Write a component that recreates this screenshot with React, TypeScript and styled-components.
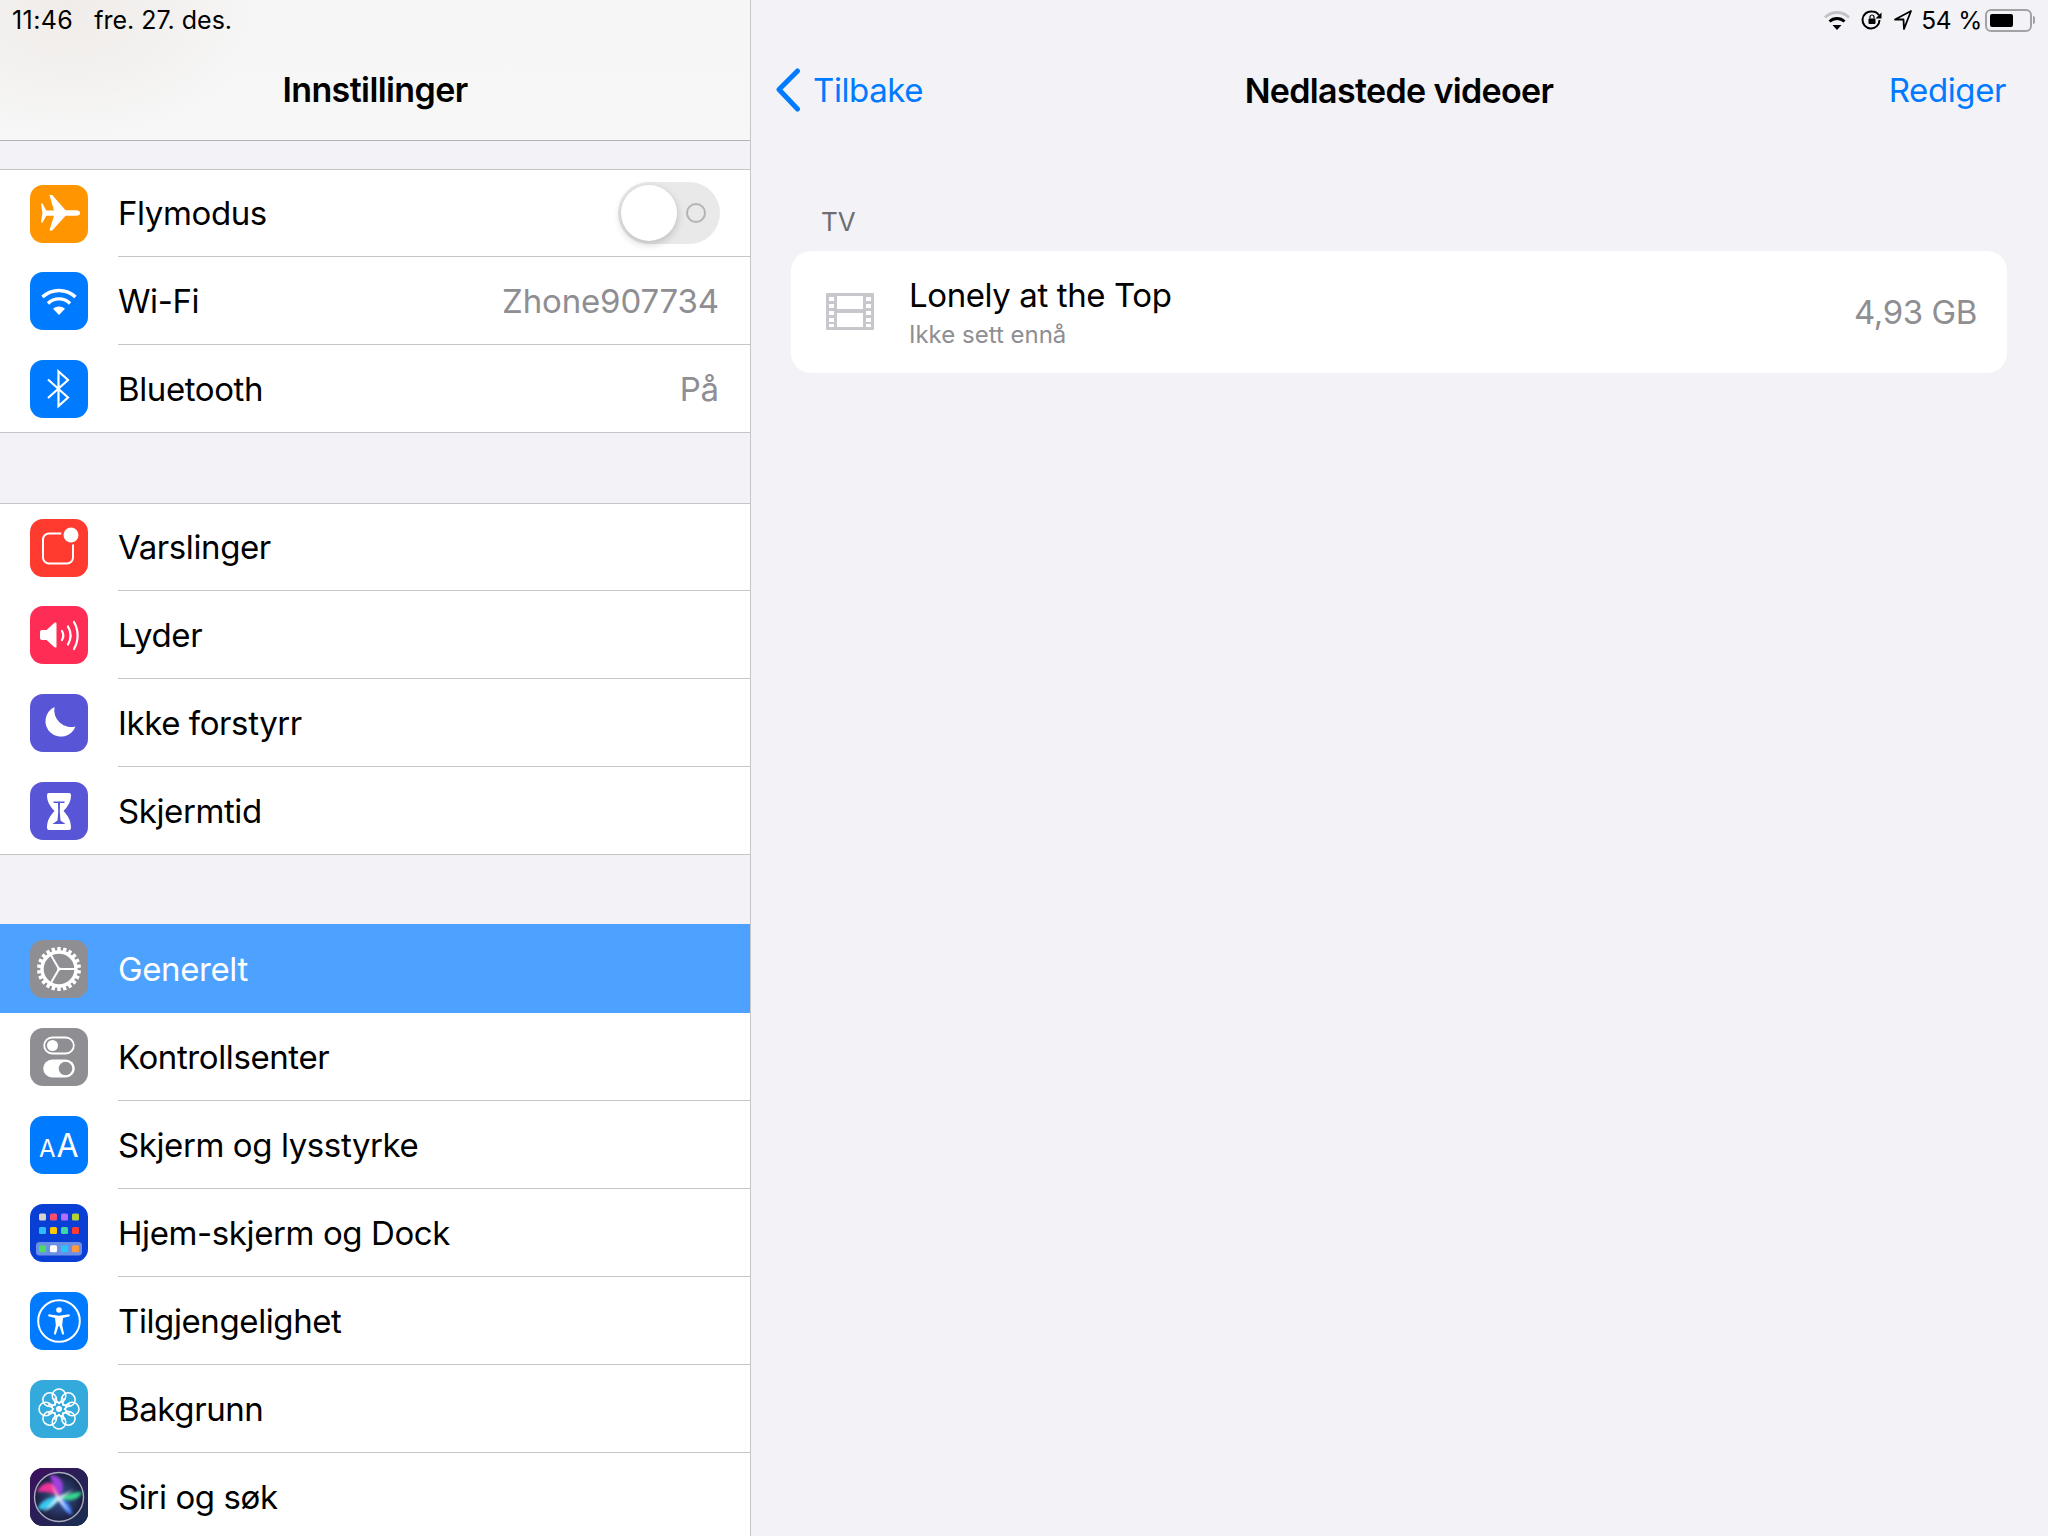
import React from 'react'
import styled, { createGlobalStyle } from 'styled-components'

const GlobalStyle = createGlobalStyle`
  html, body { margin: 0; padding: 0; background: #f2f2f7; }
  body { font-family: Inter, "Noto Sans", sans-serif; color: #000; -webkit-font-smoothing: antialiased; }
  * { box-sizing: border-box; }
`

// ICONS //

const PlaneIcon = () => (
  <svg viewBox='0 0 58 58' width='58' height='58'>
    <path
      fill='#fff'
      d='M11 18.5h1.6l3.6 7H24L19.4 10h2.8L35.6 25.2h10.6c2.4 0 4 1.2 4 2.8s-1.6 2.8-4 2.8H35.6L22.2 45.5h-2.8L24 30.8h-7.8l-3.6 6.8H11l1.4-9.6z'
    />
  </svg>
)

const WifiIcon = () => (
  <svg viewBox='0 0 58 58' width='58' height='58' fill='none' stroke='#fff' strokeWidth='3.4'>
    <path d='M12.5 25a24 24 0 0 1 33 0' />
    <path d='M18 31.500a15.500 15.500 0 0 1 22 0' />
    <path d='M23 36.800a9 9 0 0 1 12 0L29 43z' fill='#fff' stroke='none' />
  </svg>
)

const BluetoothIcon = () => (
  <svg viewBox='0 0 58 58' width='58' height='58' fill='none' stroke='#fff' strokeWidth='2.2'>
    <path d='M18 19.5 38 37.5l-9.5 8.5V11.5l9.5 8.5-20 18' />
  </svg>
)

const NoticeIcon = () => (
  <svg viewBox='0 0 58 58' width='58' height='58'>
    <rect x='13' y='14.5' width='30' height='30' rx='6' fill='none' stroke='#fff' strokeWidth='2' />
    <circle cx='41' cy='16' r='10' fill='#ff3b30' />
    <circle cx='41' cy='16' r='7.5' fill='#fff' />
  </svg>
)

const SoundIcon = () => (
  <svg viewBox='0 0 58 58' width='58' height='58'>
    <path fill='#fff' d='M10 26c0-1.2.8-2 2-2h4.500l8-7.200c1-.8 2-.4 2 .8v22.800c0 1.200-1 1.600-2 .8l-8-7.200H12c-1.200 0-2-.8-2-2z' />
    <g fill='none' stroke='#fff' strokeWidth='2.2' strokeLinecap='round'>
      <path d='M32 25a9 9 0 0 1 0 9' />
      <path d='M38 20.500a18 18 0 0 1 0 18' />
      <path d='M44 16a27 27 0 0 1 0 27' />
    </g>
  </svg>
)

const MoonIcon = () => (
  <svg viewBox='0 0 58 58' width='58' height='58'>
    <path fill='#fff' d='M24.500 13A15.500 15.500 0 1 0 45.500 32.500 A 17 17 0 0 1 24.500 13z' />
  </svg>
)

const HourglassIcon = () => (
  <svg viewBox='0 0 58 58' width='58' height='58'>
    <path
      fill='#fff'
      d='M19 11h20a2 2 0 0 1 2 2c0 7-3 11-7.500 16 4.500 5 7.500 9 7.500 17a2 2 0 0 1-2 2H19a2 2 0 0 1-2-2c0-8 3-12 7.500-17C20 24 17 20 17 13a2 2 0 0 1 2-2z'
    />
    <path fill='#5856d6' d='M23.500 19.500h11v1.500h-4.500l-.2 9 .7 8.500 5 3.500H22.500l5-3.500.7-8.500-.2-9h-4.500z' />
  </svg>
)

const teeth = Array.from({ length: 22 }, (_, i) => (i * 360) / 22)

const GearIcon = () => (
  <svg viewBox='0 0 58 58' width='58' height='58' fill='none' stroke='#fff'>
    <circle cx='29' cy='29' r='17' strokeWidth='3.4' />
    {teeth.map(a => (
      <path key={a} d='M29 7v5' strokeWidth='3.4' transform={`rotate(${a} 29 29)`} />
    ))}
    <path d='M29 29h16M29 29l-8 13.800M29 29l-8-13.800' strokeWidth='2' />
    <circle cx='29' cy='29' r='1.800' fill='#fff' stroke='none' />
  </svg>
)

const ControlIcon = () => (
  <svg viewBox='0 0 58 58' width='58' height='58'>
    <rect x='14.200' y='9.500' width='29.600' height='16' rx='8' fill='none' stroke='#fff' strokeWidth='1.800' />
    <circle cx='22.500' cy='17.500' r='5.500' fill='#fff' />
    <rect x='13.200' y='31.500' width='31.600' height='18' rx='9' fill='#fff' />
    <circle cx='35.500' cy='40.500' r='6.800' fill='#8e8e93' />
  </svg>
)

const TextSizeIcon = () => (
  <svg viewBox='0 0 58 58' width='58' height='58' fill='#fff' fontFamily='Inter, sans-serif' fontWeight='400'>
    <text x='9' y='40.700' fontSize='24'>A</text>
    <text x='26.500' y='40.700' fontSize='32'>A</text>
  </svg>
)

const homeDots = ['#d8d4cc', '#ff4d6d', '#b56dff', '#b4d432', '#2bbcff', '#ffc800', '#3dd6a8', '#ff3b30']
const dockDots = ['#4cd964', '#ffffff', '#29c5f6', '#ff9a3c']

const HomeIcon = () => (
  <svg viewBox='0 0 58 58' width='58' height='58'>
    {homeDots.map((c, i) => (
      <rect key={i} x={9 + (i % 4) * 11} y={i < 4 ? 9.500 : 23} width='7' height='7' rx='1.500' fill={c} />
    ))}
    <rect x='6' y='38' width='46' height='13.500' rx='3.500' fill='#6c8fe6' />
    {dockDots.map((c, i) => (
      <rect key={i} x={9 + i * 11} y='41.300' width='7' height='7' rx='1.500' fill={c} />
    ))}
  </svg>
)

const AccessIcon = () => (
  <svg viewBox='0 0 58 58' width='58' height='58'>
    <circle cx='29' cy='29' r='20.800' fill='none' stroke='#fff' strokeWidth='2' />
    <circle cx='29' cy='18' r='2.800' fill='#fff' />
    <path
      fill='#fff'
      d='M18.500 22.300 29 23.800l10.500-1.500.3 1.900-6.800 1.800-.8 7.200 2 9-2 .4-2.600-8.400h-1.200L25.800 42.600l-2-.4 2-9-.8-7.200-6.800-1.800z'
    />
  </svg>
)

const petals = [0, 45, 90, 135, 180, 225, 270, 315]

const FlowerIcon = () => (
  <svg viewBox='0 0 58 58' width='58' height='58' fill='none' stroke='#fff' strokeWidth='1.500'>
    {petals.map(a => (
      <g key={a} transform={`rotate(${a} 29 29)`}>
        <circle cx='29' cy='15.800' r='6.800' fill='none' />
        <path d='M29 24 25 18M29 24l4-6' strokeWidth='1.200' />
      </g>
    ))}
    <circle cx='29' cy='29' r='3' fill='#fff' stroke='none' />
  </svg>
)

const SiriIcon = () => (
  <svg viewBox='0 0 58 58' width='58' height='58'>
    <defs>
      <linearGradient id='siriTile' x1='0' y1='0' x2='1' y2='1'>
        <stop offset='0%' stopColor='#3c0f5e' />
        <stop offset='100%' stopColor='#17304f' />
      </linearGradient>
      <radialGradient id='siriGlow' cx='50%' cy='50%' r='50%'>
        <stop offset='0%' stopColor='#3a5a92' />
        <stop offset='100%' stopColor='#1a1d3e' />
      </radialGradient>
      <filter id='siriBlur' x='-30%' y='-30%' width='160%' height='160%'>
        <feGaussianBlur stdDeviation='1.500' />
      </filter>
    </defs>
    <rect width='58' height='58' fill='url(#siriTile)' />
    <circle cx='29' cy='29' r='24.500' fill='url(#siriGlow)' stroke='#a9acbc' strokeWidth='1.400' />
    <g filter='url(#siriBlur)'>
      <path d='M7 24c6-12 18-14 24 5-8-5-16-6-24-5z' fill='#f0329a' />
      <path d='M20 7c10 0 17 8 10 22-4-7-8-14-10-22z' fill='#a040e0' />
      <path d='M52 24c-3 8-13 11-23 5 8-3 15-5 23-5z' fill='#35d88c' />
      <path d='M8 41c0-6 12-14 21-12-3 9-11 15-21 12z' fill='#38c8f0' />
      <path d='M29 29c8 3 13 10 13 18-8-3-12-10-13-18z' fill='#3d7cf5' />
    </g>
    <path d='M29 29 44 21 31.500 31 40 45 28 32.500 13 45 26.500 29 21 15z' fill='#fff' opacity='.85' filter='url(#siriBlur)' />
  </svg>
)

const FilmIcon = () => (
  <svg viewBox='0 0 48 38' width='48' height='38'>
    <path
      fill='#c7c7cc'
      fillRule='evenodd'
      d='M1 0h46a1 1 0 0 1 1 1v35a1 1 0 0 1-1 1H1a1 1 0 0 1-1-1V1a1 1 0 0 1 1-1zM11 3v13h26V3zM11 20v14h26V20zM3 4v4h5V4zM3 11v4h5v-4zM3 18v4h5v-4zM3 25v4h5v-4zM3 31v3h5v-3zM40 4v4h5V4zM40 11v4h5v-4zM40 18v4h5v-4zM40 25v4h5v-4zM40 31v3h5v-3z'
    />
  </svg>
)

const BackChevron = () => (
  <svg viewBox='0 0 26 44' width='26' height='44' fill='none' stroke='#007aff' strokeWidth='5' strokeLinecap='round' strokeLinejoin='round'>
    <path d='M22.500 3 4 21.500 22.500 41' />
  </svg>
)

const StatusWifi = () => (
  <svg viewBox='0 0 28 20' width='28' height='20' fill='none' strokeWidth='3'>
    <path d='M2 7.500a17 17 0 0 1 24 0' stroke='#c4c4c8' />
    <path d='M6.500 11.500a11 11 0 0 1 15 0' stroke='#000' />
    <path d='M9.500 15h9L14 20z' fill='#000' stroke='none' />
  </svg>
)

const StatusLock = () => (
  <svg viewBox='0 0 22 22' width='22' height='22' fill='none' stroke='#000'>
    <path d='M18.500 11A8.500 8.500 0 1 1 11 2.500c3 0 5.500 1.400 7 3.800' strokeWidth='2' />
    <path d='M20.500 3.500v6h-6z' fill='#000' stroke='none' />
    <rect x='7.500' y='9.500' width='7' height='5.500' rx='1' fill='#000' stroke='none' />
    <path d='M9 9.500V8a2 2 0 0 1 4 0v1.500' strokeWidth='1.200' />
  </svg>
)

const StatusArrow = () => (
  <svg viewBox='0 0 20 22' width='20' height='22' fill='none' stroke='#000' strokeWidth='1.800' strokeLinejoin='round'>
    <path d='M18 2 2 10.500h8.500L11 20z' />
  </svg>
)

const Battery = () => (
  <BatteryWrap>
    <BatteryBody>
      <BatteryFill />
    </BatteryBody>
    <BatteryTip />
  </BatteryWrap>
)

// DATA //

type RowData = {
  label: string
  bg: string
  icon: React.ReactNode
  value?: string
  toggle?: boolean
  selected?: boolean
}

const groupOne: RowData[] = [
  { label: 'Flymodus', bg: '#ff9500', icon: <PlaneIcon />, toggle: true },
  { label: 'Wi-Fi', bg: '#007aff', icon: <WifiIcon />, value: 'Zhone907734' },
  { label: 'Bluetooth', bg: '#007aff', icon: <BluetoothIcon />, value: 'På' },
]

const groupTwo: RowData[] = [
  { label: 'Varslinger', bg: '#ff3b30', icon: <NoticeIcon /> },
  { label: 'Lyder', bg: '#ff2d55', icon: <SoundIcon /> },
  { label: 'Ikke forstyrr', bg: '#5856d6', icon: <MoonIcon /> },
  { label: 'Skjermtid', bg: '#5856d6', icon: <HourglassIcon /> },
]

const groupThree: RowData[] = [
  { label: 'Generelt', bg: '#8e8e93', icon: <GearIcon />, selected: true },
  { label: 'Kontrollsenter', bg: '#8e8e93', icon: <ControlIcon /> },
  { label: 'Skjerm og lysstyrke', bg: '#007aff', icon: <TextSizeIcon /> },
  { label: 'Hjem-skjerm og Dock', bg: '#0a3fd6', icon: <HomeIcon /> },
  { label: 'Tilgjengelighet', bg: '#007aff', icon: <AccessIcon /> },
  { label: 'Bakgrunn', bg: '#34aadc', icon: <FlowerIcon /> },
  { label: 'Siri og søk', bg: '#1b1a3c', icon: <SiriIcon /> },
]

const SettingsGroup = ({ rows, flush, gap }: { rows: RowData[]; flush?: boolean; gap: number }) => (
  <Group $flush={flush} $gap={gap}>
    {rows.map((row, idx) => {
      const isFirst = idx === 0
      const isLast = idx === rows.length - 1
      return (
        <Row key={row.label} $selected={row.selected} $first={isFirst} $last={isLast}>
          <IconTile $bg={row.bg}>{row.icon}</IconTile>
          <RowBody $plain={row.selected || isLast}>
            <RowLabel $selected={row.selected}>{row.label}</RowLabel>
            {row.value ? <RowValue>{row.value}</RowValue> : null}
            {row.toggle ? (
              <Toggle>
                <ToggleKnob />
                <ToggleMark />
              </Toggle>
            ) : null}
          </RowBody>
        </Row>
      )
    })}
  </Group>
)

const App: React.FC = () => {
  return (
    <Page>
      <GlobalStyle />
      <Sidebar>
        <SideHeader>
          <StatusLeft>
            <StatusTime>11:46</StatusTime>
            <span>fre. 27. des.</span>
          </StatusLeft>
          <SideTitle>Innstillinger</SideTitle>
        </SideHeader>
        <SettingsGroup rows={groupOne} gap={28} />
        <SettingsGroup rows={groupTwo} gap={70} />
        <SettingsGroup rows={groupThree} gap={69} flush />
      </Sidebar>
      <Detail>
        <StatusRight>
          <StatusWifi />
          <StatusLock />
          <StatusArrow />
          <BatteryText>54 %</BatteryText>
          <Battery />
        </StatusRight>
        <NavBar>
          <BackLink>
            <BackChevron />
            <span>Tilbake</span>
          </BackLink>
          <NavTitle>Nedlastede videoer</NavTitle>
          <EditLink>Rediger</EditLink>
        </NavBar>
        <SectionLabel>TV</SectionLabel>
        <VideoCard>
          <FilmSlot>
            <FilmIcon />
          </FilmSlot>
          <VideoText>
            <VideoTitle>Lonely at the Top</VideoTitle>
            <VideoSub>Ikke sett ennå</VideoSub>
          </VideoText>
          <VideoSize>4,93 GB</VideoSize>
        </VideoCard>
      </Detail>
    </Page>
  )
}

// Styles

const Page = styled.div`
  display: flex;
  width: 2048px;
  height: 1536px;
  overflow: hidden;
  background: #f2f2f7;
`

const Sidebar = styled.div`
  width: 751px;
  flex: none;
  height: 1536px;
  overflow: hidden;
  border-right: 1px solid #c6c6c8;
`

const SideHeader = styled.div`
  height: 141px;
  padding-bottom: 1px;
  border-bottom: 1px solid #b2b2b4;
  background: radial-gradient(ellipse 190px 130px at 70px 10px, #f0ece9 0%, rgba(240, 236, 233, 0) 100%),
    linear-gradient(180deg, #f6f6f6 0%, #f7f7f7 100%);
  display: flex;
  flex-direction: column;
`

const StatusLeft = styled.div`
  height: 40px;
  padding-left: 12px;
  display: flex;
  align-items: center;
  gap: 21px;
  font-size: 25px;
`

const StatusTime = styled.span`
  letter-spacing: 0.4px;
`

const SideTitle = styled.div`
  flex: 1;
  display: flex;
  align-items: center;
  justify-content: center;
  font-size: 34px;
  font-weight: 600;
  letter-spacing: -0.6px;
`

const Group = styled.div<{ $flush?: boolean; $gap: number }>`
  margin-top: ${p => p.$gap}px;
  background: #fff;
  border-top: ${p => (p.$flush ? 'none' : '1px solid #c6c6c8')};
  border-bottom: 1px solid #c6c6c8;
`

const Row = styled.div<{ $selected?: boolean; $first?: boolean; $last?: boolean }>`
  display: flex;
  align-items: center;
  height: ${p => (p.$selected ? 89 : p.$first || p.$last ? 87 : 88)}px;
  padding-left: 30px;
  background: ${p => (p.$selected ? '#4da2ff' : '#fff')};
`

const IconTile = styled.div<{ $bg: string }>`
  width: 58px;
  height: 58px;
  flex: none;
  border-radius: 13px;
  overflow: hidden;
  background: ${p => p.$bg};
  svg {
    display: block;
  }
`

const RowBody = styled.div<{ $plain?: boolean }>`
  flex: 1;
  align-self: stretch;
  margin-left: 30px;
  padding-right: 31px;
  display: flex;
  align-items: center;
  justify-content: space-between;
  border-bottom: ${p => (p.$plain ? 'none' : '1px solid #c6c6c8')};
`

const RowLabel = styled.span<{ $selected?: boolean }>`
  font-size: 33px;
  letter-spacing: -0.4px;
  color: ${p => (p.$selected ? '#fff' : '#000')};
`

const RowValue = styled.span`
  font-size: 33px;
  letter-spacing: -0.15px;
  color: #8e8e93;
`

const Toggle = styled.div`
  width: 102px;
  height: 62px;
  margin-right: -1px;
  padding: 3px;
  border-radius: 31px;
  background: #e9e9ea;
  display: flex;
  align-items: center;
  gap: 9px;
`

const ToggleKnob = styled.div`
  width: 56px;
  height: 56px;
  border-radius: 50%;
  background: #fff;
  box-shadow: 0 3px 8px rgba(0, 0, 0, 0.2);
`

const ToggleMark = styled.div`
  width: 20px;
  height: 20px;
  border-radius: 50%;
  border: 2px solid #b3b3b3;
`

const Detail = styled.div`
  flex: 1;
  display: flex;
  flex-direction: column;
  padding: 0 41px 0 40px;
`

const StatusRight = styled.div`
  height: 40px;
  margin-right: -28px;
  display: flex;
  align-items: center;
  justify-content: flex-end;
  gap: 10px;
`

const BatteryText = styled.span`
  margin-left: -2px;
  font-size: 24.5px;
  letter-spacing: -0.2px;
`

const BatteryWrap = styled.div`
  display: flex;
  align-items: center;
  gap: 1px;
  margin-left: -7px;
`

const BatteryBody = styled.div`
  width: 47px;
  height: 23px;
  padding: 3px;
  border: 2px solid #a2a2a5;
  border-radius: 6px;
`

const BatteryFill = styled.div`
  width: 23px;
  height: 100%;
  border-radius: 2px;
  background: #000;
`

const BatteryTip = styled.div`
  width: 2px;
  height: 8px;
  border-radius: 0 2px 2px 0;
  background: #a2a2a5;
`

const NavBar = styled.div`
  height: 100px;
  display: grid;
  grid-template-columns: 1fr auto 1fr;
  align-items: center;
`

const BackLink = styled.div`
  display: flex;
  align-items: center;
  gap: 12px;
  margin-left: -16px;
  font-size: 33px;
  letter-spacing: -0.4px;
  color: #007aff;
`

const NavTitle = styled.div`
  font-size: 34px;
  font-weight: 600;
  letter-spacing: -0.65px;
`

const EditLink = styled.div`
  justify-self: end;
  margin-right: 1px;
  font-size: 33px;
  letter-spacing: -0.4px;
  color: #007aff;
`

const SectionLabel = styled.div`
  margin-top: 65px;
  padding-left: 30px;
  height: 46px;
  font-size: 26px;
  line-height: 34px;
  color: #6d6d72;
`

const VideoCard = styled.div`
  height: 122px;
  display: flex;
  align-items: center;
  padding: 0 30px 0 35px;
  background: #fff;
  border-radius: 20px;
`

const FilmSlot = styled.div`
  width: 83px;
  flex: none;
  svg {
    display: block;
  }
`

const VideoText = styled.div`
  flex: 1;
  display: flex;
  flex-direction: column;
  gap: 4px;
  margin-top: -2px;
`

const VideoTitle = styled.div`
  font-size: 33px;
  line-height: 44px;
  letter-spacing: -0.4px;
`

const VideoSub = styled.div`
  font-size: 24px;
  line-height: 28px;
  color: #8e8e93;
`

const VideoSize = styled.div`
  font-size: 33px;
  letter-spacing: -0.4px;
  color: #8e8e93;
`

export default App
